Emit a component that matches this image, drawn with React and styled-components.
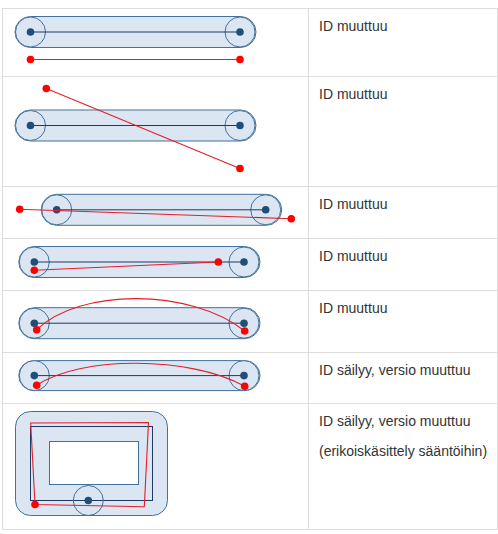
import React from 'react'
import styled, { createGlobalStyle } from 'styled-components'

const GlobalStyle = createGlobalStyle`
    body {
        margin: 8px 0px 0px 2px;
        background-color: #ffffff;
        font-family: "Liberation Sans", Arial, sans-serif;
    }
`;

const FILL = '#dce6f2';
const EDGE = '#41719c';
const DOT = '#1f4e79';
const LINK = '#203864';
const RED = '#ff0000';
const RED_LINE = '#e41e2b';

const rows = [
    { top: 16, height: 53, notes: ['ID muuttuu'], Drawing: StraightBelow },
    { top: 84, height: 95, notes: ['ID muuttuu'], Drawing: CrossingDiagonal },
    { top: 194, height: 37, notes: ['ID muuttuu'], Drawing: LongerThanLink },
    { top: 246, height: 37, notes: ['ID muuttuu'], Drawing: ShorterEnd },
    { top: 298, height: 47, notes: ['ID muuttuu'], Drawing: HighArc },
    { top: 360, height: 36, notes: ['ID säilyy, versio muuttuu'], Drawing: LowArc },
    { top: 411, height: 111, notes: ['ID säilyy, versio muuttuu', '(erikoiskäsittely sääntöihin)'], Drawing: RingRoad },
];

export default function App() {
    return (
        <React.Fragment>
            <GlobalStyle />
            <Table>
                <tbody>
                    {rows.map(({ top, height, notes, Drawing }) => (
                        <tr key={String(top)}>
                            <DiagramCell>
                                <Canvas
                                    width="285"
                                    height={height}
                                    viewBox={`13 ${top} 285 ${height}`}
                                >
                                    <Drawing />
                                </Canvas>
                            </DiagramCell>
                            <TextCell>
                                {notes.map((note) => <Note key={note}>{ note }</Note>)}
                            </TextCell>
                        </tr>
                    ))}
                </tbody>
            </Table>
        </React.Fragment>
    )
}

// drawing parts
const Link = ({ x1, x2, cy, h = 31 }) => (
    <g>
        <rect x={x1 - 15.5} y={cy - h / 2} width={x2 - x1 + 31.5} height={h} rx={h / 2} fill={FILL} stroke={EDGE} strokeWidth="1" />
        <circle cx={x1} cy={cy} r="15" fill={FILL} stroke={EDGE} strokeWidth="1" />
        <circle cx={x2} cy={cy} r="15" fill={FILL} stroke={EDGE} strokeWidth="1" />
        <line x1={x1} y1={cy} x2={x2} y2={cy} stroke={LINK} strokeWidth="1" />
        <circle cx={x1} cy={cy} r="3.8" fill={DOT} />
        <circle cx={x2} cy={cy} r="3.8" fill={DOT} />
    </g>
);

const RedPath = ({ d, dots }) => (
    <g>
        <path d={d} fill="none" stroke={RED_LINE} strokeWidth="1.1" />
        {dots.map(([x, y]) => <circle key={`${x}-${y}`} cx={x} cy={y} r="3.8" fill={RED} />)}
    </g>
);

function StraightBelow() {
    return (
        <g>
            <Link x1={30.5} x2={240} cy={32} />
            <RedPath d="M30.5 59.5 L240 59.5" dots={[[30.5, 59.5], [240, 59.5]]} />
        </g>
    )
}

function CrossingDiagonal() {
    return (
        <g>
            <Link x1={30.5} x2={240} cy={125.5} />
            <RedPath d="M46.3 88.5 L240 168.5" dots={[[46.3, 88.5], [240, 168.5]]} />
        </g>
    )
}

function LongerThanLink() {
    return (
        <g>
            <Link x1={56.7} x2={265.7} cy={209.8} />
            <RedPath d="M19.7 209.3 L291.3 218.7" dots={[[19.7, 209.3], [291.3, 218.7]]} />
        </g>
    )
}

function ShorterEnd() {
    return (
        <g>
            <Link x1={34.3} x2={244} cy={262} />
            <RedPath d="M34.3 270.3 L218.3 262" dots={[[34.3, 270.3], [218.3, 262]]} />
        </g>
    )
}

function HighArc() {
    return (
        <g>
            <Link x1={34.3} x2={244} cy={323.2} />
            <RedPath d="M36.7 329.7 C80 288 190 288 244.7 331" dots={[[36.7, 329.7], [244.7, 331]]} />
        </g>
    )
}

function LowArc() {
    return (
        <g>
            <Link x1={34.3} x2={244} cy={375.6} h={30} />
            <RedPath d="M36.7 385.3 C80 355.8 190 355.8 244.7 386.3" dots={[[36.7, 385.3], [244.7, 386.3]]} />
        </g>
    )
}

function RingRoad() {
    return (
        <g>
            <rect x="15.5" y="411.5" width="152" height="104" rx="15" fill={FILL} stroke={EDGE} strokeWidth="1" />
            <rect x="49.5" y="441.5" width="89" height="43" fill="#ffffff" stroke={EDGE} strokeWidth="1" />
            <rect x="30.5" y="426.5" width="122" height="74" fill="none" stroke={LINK} strokeWidth="1" />
            <circle cx="88.3" cy="500.5" r="15" fill="none" stroke={EDGE} strokeWidth="1" />
            <RedPath d="M30.7 423 L148.5 422.5 L144.3 506.7 L35 504.5 Z" dots={[[35, 504.5]]} />
            <circle cx="88.3" cy="500.5" r="3.8" fill={DOT} />
        </g>
    )
}

// styled components
const Table = styled.table`
    border-collapse: collapse;
    table-layout: fixed;
    font-size: 14px;
    line-height: 20px;
    color: #333333;
`;

const DiagramCell = styled.td`
    width: 285px;
    padding: 7px 10px;
    border: 1px solid #dddddd;
    vertical-align: top;
`;

const TextCell = styled.td`
    width: 167px;
    padding: 7px 10px;
    border: 1px solid #dddddd;
    vertical-align: top;
`;

const Canvas = styled.svg`
    display: block;
    overflow: visible;
`;

const Note = styled.p`
    margin: 0px;
    white-space: nowrap;

    & + & {
        margin-top: 10px;
    }
`;
